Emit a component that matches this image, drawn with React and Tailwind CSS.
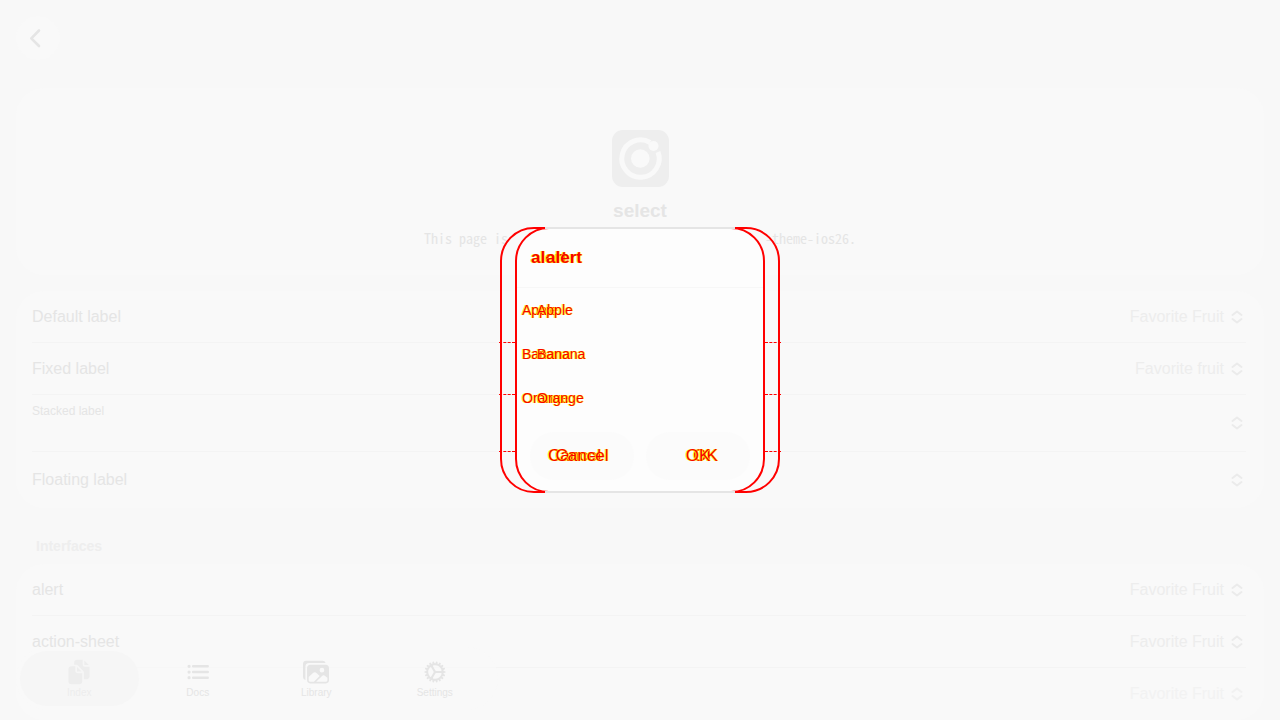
import React from "react";
import { IoDocuments, IoList, IoImages, IoCog } from "react-icons/io5";

function Updown() {
  return (
    <svg viewBox="0 0 12 14" className="h-[14px] w-3 shrink-0 fill-none stroke-[#ebebeb] stroke-2" strokeLinecap="round" strokeLinejoin="round" aria-hidden="true">
      <path d="M1.5 5 6 1.5 10.5 5M1.5 9 6 12.5 10.5 9" />
    </svg>
  );
}

function Row({ label, value, size = "h-[52px]", stacked, faded }) {
  return (
    <button className={"flex w-full items-center justify-between pr-[3px] text-left text-base " + size + (faded ? " opacity-50" : "")}>
      <span className={stacked ? "self-start pt-2 text-xs leading-4" : ""}>{label}</span>
      <span className="flex items-center gap-[7px] text-[#ededed]">
        {value}
        <Updown />
      </span>
    </button>
  );
}

function Group({ children }) {
  return (
    <div className="mx-4 divide-y divide-[#f4f4f4] rounded-[28px] bg-[#f9f9f9] pr-[18px] pl-4">
      {children}
    </div>
  );
}

const fringe = "[text-shadow:-1px_0_0_#ffff00cc,1px_0_0_#ffff00cc] ";

function Alert({ width }) {
  return (
    <section className={"col-start-1 row-start-1 flex h-[266px] flex-col rounded-[34px] border-2 border-[#ff0000] text-[#f80000] " + width}>
      <h2 className={fringe + "flex h-[58px] items-center pl-[29px] text-[17px] font-bold"}>alert</h2>
      <div className="flex flex-col pt-px">
        {["Apple", "Banana", "Orange"].map((fruit) => (
          <button key={fruit} className={fringe + "flex h-11 items-center pl-5 text-left text-sm"}>{fruit}</button>
        ))}
      </div>
      <div className="flex px-[7px] pt-3 text-[17px]">
        <button className={fringe + "h-12 flex-1"}>Cancel</button>
        <button className={fringe + "h-12 flex-1"}>OK</button>
      </div>
    </section>
  );
}

function SideMarks({ gap }) {
  return (
    <div className={"flex justify-between " + gap}>
      <span className="w-4 border-t border-dashed border-[#ff0000]" />
      <span className="w-4 border-t border-dashed border-[#ff0000]" />
    </div>
  );
}

function Tab({ icon, label, active }) {
  return (
    <a
      href="#"
      className={
        "flex h-[55px] flex-1 flex-col items-center justify-center rounded-full pt-px text-[10px] leading-3 " +
        (active ? "bg-[#f6f6f6] text-[#ededed]" : "text-[#e5e5e5]")
      }
    >
      {icon}
      <span className="pt-[2px]">{label}</span>
    </a>
  );
}

export default function App() {
  return (
    <div className="relative h-screen overflow-hidden bg-[#f8f8f8] font-['Liberation_Sans',sans-serif] text-[#e5e5e5]">
      <header className="px-4 pt-4">
        <button aria-label="Back" className="flex size-11 items-center justify-center rounded-full bg-[#f9f9f9] pr-1.5">
          <svg viewBox="0 0 12 20" className="h-5 w-3 fill-none stroke-[#e5e5e5]" strokeWidth="2.6" strokeLinecap="round" strokeLinejoin="round" aria-hidden="true">
            <path d="M10 2.5 2.3 10.3 10 18" />
          </svg>
        </button>
      </header>
      <main className="pt-7">
        <div className="mx-4 flex h-[187px] flex-col items-center rounded-[28px] bg-[#f9f9f9] pt-[42px]">
          <svg viewBox="0 0 57 57" className="size-[57px]" aria-hidden="true">
            <rect width="57" height="57" rx="11" fill="#eeeeee" />
            <path d="M38 12.5A18.7 18.7 0 1 0 46 22" fill="none" stroke="#f9f9f9" strokeWidth="5" />
            <circle cx="28.3" cy="28.5" r="9.3" fill="#f9f9f9" />
            <circle cx="41.5" cy="16" r="5" fill="#f9f9f9" />
          </svg>
          <h1 className="mt-3 text-[19px] leading-6 font-bold">select</h1>
          <p className="mt-[5px] flex w-[432px] justify-between font-['Noto_Sans_Mono_CJK_JP','Noto_Sans_CJK_JP',monospace] text-sm leading-5">
            <span>This page is</span>
            <span>-theme-ios26.</span>
          </p>
        </div>
        <div className="mt-4">
          <Group>
            <Row label="Default label" value="Favorite Fruit" />
            <Row label="Fixed label" value="Favorite fruit" />
            <Row label="Stacked label" size="h-[57px]" stacked />
            <Row label="Floating label" size="h-14" />
          </Group>
        </div>
        <h2 className="mt-7 mb-2 pl-9 text-sm leading-5 font-bold text-[#eeeeee]">Interfaces</h2>
        <Group>
          <Row label="alert" value="Favorite Fruit" />
          <Row label="action-sheet" value="Favorite Fruit" />
          <Row value="Favorite Fruit" faded />
        </Group>
      </main>
      <nav className="absolute bottom-[10px] left-4 flex w-[482px] rounded-full bg-[#f8f8f8a0] p-1">
        <Tab active icon={<IoDocuments className="size-[26px]" />} label="Index" />
        <Tab icon={<IoList className="size-[26px]" />} label="Docs" />
        <Tab icon={<IoImages className="size-[26px]" />} label="Library" />
        <Tab icon={<IoCog className="size-[26px]" />} label="Settings" />
      </nav>
      <div role="dialog" aria-label="alert" className="absolute inset-0 grid place-content-center place-items-center">
        <div className="col-start-1 row-start-1 h-[266px] w-[282px]">
          <SideMarks gap="pt-[115px]" />
          <SideMarks gap="pt-[51px]" />
          <SideMarks gap="pt-14" />
        </div>
        <div className="col-start-1 row-start-1 h-[266px] w-[250px] rounded-[34px] bg-[#fdfdfd]">
          <div className="h-[61px] border-b border-[#f7f7f7]" />
          <div className="flex gap-3 px-[15px] pt-36">
            <div className="h-12 flex-1 rounded-full bg-[#fbfbfb]" />
            <div className="h-12 flex-1 rounded-full bg-[#fbfbfb]" />
          </div>
        </div>
        <Alert width="w-[280px]" />
        <Alert width="w-[250px]" />
        <div className="pointer-events-none col-start-1 row-start-1 h-[266px] w-[190px] border-y-2 border-[#e5e5e5]" />
      </div>
    </div>
  );
}
